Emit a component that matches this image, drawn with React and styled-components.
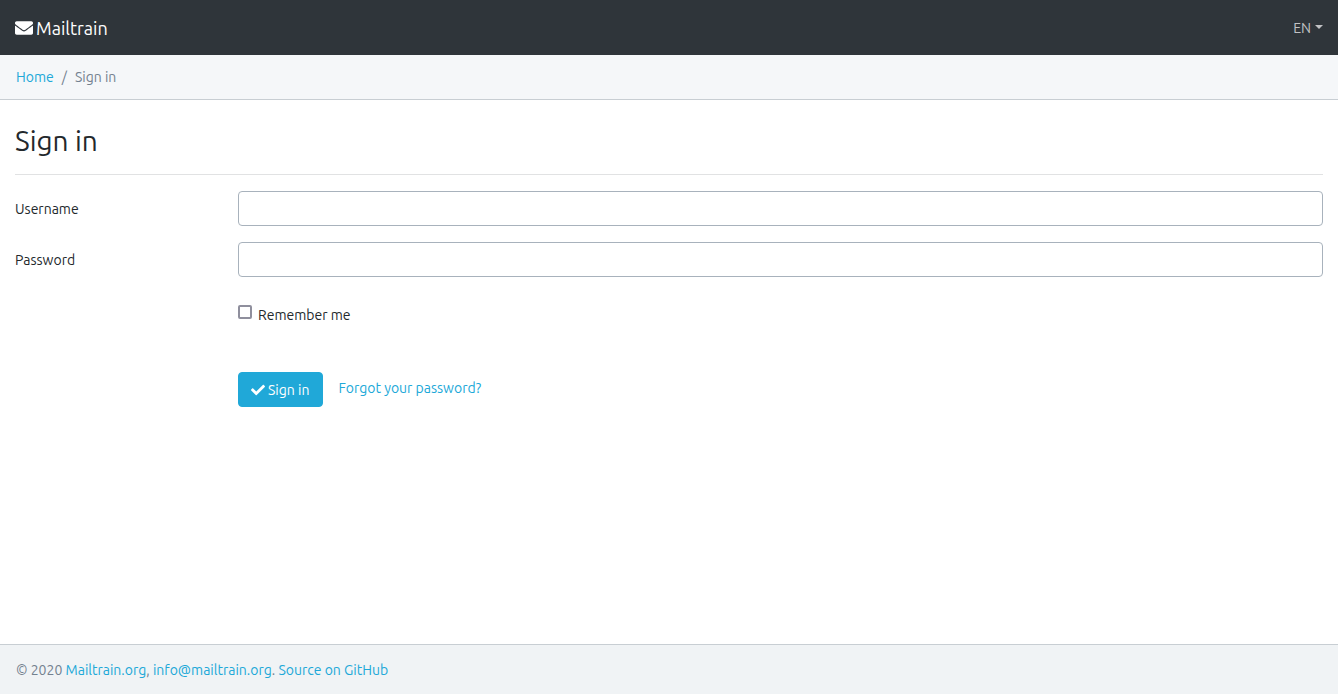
import React, { useState } from "react";
import styled, { createGlobalStyle } from "styled-components";
import { FaCheck, FaEnvelope } from "react-icons/fa";

const GlobalStyle = createGlobalStyle`
  *, *::before, *::after {
    box-sizing: border-box;
  }

  body {
    margin: 0;
    background-color: #fff;
    color: #23282c;
    font-family: Ubuntu, "Open Sans", sans-serif;
    font-size: 14px;
    line-height: 21px;
  }
`;

const Page = styled.div`
  display: flex;
  flex-direction: column;
  min-height: 100vh;
`;

const Header = styled.header`
  display: flex;
  align-items: center;
  justify-content: space-between;
  height: 55px;
  padding: 0 15px;
  background-color: #2f353a;
`;

const Brand = styled.a`
  display: flex;
  align-items: center;
  gap: 3px;
  padding-top: 2px;
  color: #fff;
  font-size: 18px;
  text-decoration: none;

  svg {
    margin-bottom: 2px;
  }
`;

const LanguageButton = styled.button`
  display: flex;
  align-items: center;
  gap: 4px;
  padding: 2px 0 0;
  border: 0;
  background: none;
  color: #c1c2c4;
  font: inherit;
  cursor: pointer;

  &::after {
    content: "";
    margin-bottom: 4px;
    border-top: 4px solid;
    border-right: 4px solid transparent;
    border-left: 4px solid transparent;
  }
`;

const Breadcrumb = styled.ol`
  display: flex;
  margin: 0;
  padding: 12px 16px 11px;
  border-bottom: 1px solid #c8ced3;
  background-color: #f5f7f9;
  list-style: none;
`;

const BreadcrumbItem = styled.li`
  color: #73818f;

  & + &::before {
    content: "/";
    padding: 0 8px;
  }
`;

const Link = styled.a`
  color: #20a8d8;
  text-decoration: none;

  &:hover {
    text-decoration: underline;
  }
`;

const Main = styled.main`
  flex: 1;
  padding: 24px 15px;
`;

const Title = styled.h2`
  margin: 0 0 16px;
  padding-bottom: 16px;
  border-bottom: 1px solid #e1e2e3;
  font-size: 28px;
  font-weight: 400;
  line-height: 34px;
`;

const Form = styled.form`
  margin: 0 -15px;
`;

const Row = styled.div`
  display: grid;
  grid-template-columns: 1fr 5fr;
  align-items: center;
  margin-bottom: 16px;
`;

const Label = styled.label`
  padding: 2px 15px 0;
`;

const Field = styled.div`
  grid-column: 2;
  padding: 0 15px;
`;

const Input = styled.input`
  display: block;
  width: 100%;
  height: 35px;
  padding: 6px 12px;
  border: 1px solid #a8b2bc;
  border-radius: 4px;
  background-color: #fff;
  color: #5c6873;
  font: inherit;

  &:focus {
    border-color: #8ad4ee;
    outline: 0;
  }
`;

const CheckField = styled(Field)`
  display: flex;
  padding: 12px 15px 14px;
`;

const CheckLabel = styled.label`
  display: flex;
  align-items: flex-start;
  gap: 6px;
`;

const Checkbox = styled.input`
  appearance: none;
  width: 14px;
  height: 14px;
  margin: 0;
  border: 2px solid #8f8f9d;
  border-radius: 2px;
  background-color: #fff;

  &:checked {
    border-color: #20a8d8;
    background-color: #20a8d8;
  }
`;

const Actions = styled(Field)`
  display: flex;
  align-items: flex-start;
  gap: 15px;
  padding-top: 16px;
`;

const SubmitButton = styled.button`
  display: flex;
  align-items: center;
  gap: 3px;
  height: 35px;
  padding: 2px 13px 0 12px;
  border: 1px solid #20a8d8;
  border-radius: 4px;
  background-color: #20a8d8;
  color: #fff;
  font: inherit;
  cursor: pointer;

  svg {
    margin-bottom: 2px;
  }
`;

const ForgotLink = styled(Link)`
  padding-top: 6px;
`;

const Footer = styled.footer`
  padding: 15px 16px 13px;
  border-top: 1px solid #c8ced3;
  background-color: #f0f3f5;
  color: #73818f;
`;

const App = () => {
    const [form, setForm] = useState({ username: "", password: "", remember: false });

    const handleChange = ({ target }) => {
        const value = target.type === "checkbox" ? target.checked : target.value;
        setForm({ ...form, [target.name]: value });
    };

    const handleSubmit = (e) => {
        e.preventDefault();
    };

    return (
        <Page>
            <GlobalStyle />
            <Header>
                <Brand href="/">
                    <FaEnvelope size={18} />
                    Mailtrain
                </Brand>
                <LanguageButton type="button" aria-haspopup="true">EN</LanguageButton>
            </Header>
            <nav>
                <Breadcrumb>
                    <BreadcrumbItem><Link href="/">Home</Link></BreadcrumbItem>
                    <BreadcrumbItem>Sign in</BreadcrumbItem>
                </Breadcrumb>
            </nav>
            <Main>
                <Title>Sign in</Title>
                <Form onSubmit={handleSubmit}>
                    <Row>
                        <Label htmlFor="username">Username</Label>
                        <Field>
                            <Input id="username" name="username" type="text" value={form.username} onChange={handleChange} />
                        </Field>
                    </Row>
                    <Row>
                        <Label htmlFor="password">Password</Label>
                        <Field>
                            <Input id="password" name="password" type="password" value={form.password} onChange={handleChange} />
                        </Field>
                    </Row>
                    <Row>
                        <CheckField>
                            <CheckLabel htmlFor="remember">
                                <Checkbox id="remember" name="remember" type="checkbox" checked={form.remember} onChange={handleChange} />
                                Remember me
                            </CheckLabel>
                        </CheckField>
                    </Row>
                    <Row>
                        <Actions>
                            <SubmitButton type="submit">
                                <FaCheck size={14} />
                                Sign in
                            </SubmitButton>
                            <ForgotLink href="/login/forgot">Forgot your password?</ForgotLink>
                        </Actions>
                    </Row>
                </Form>
            </Main>
            <Footer>
                © 2020 <Link href="https://mailtrain.org">Mailtrain.org</Link>,{" "}
                <Link href="mailto:info@mailtrain.org">info@mailtrain.org</Link>.{" "}
                <Link href="https://github.com/Mailtrain-org/mailtrain">Source on GitHub</Link>
            </Footer>
        </Page>
    );
};

export default App;
